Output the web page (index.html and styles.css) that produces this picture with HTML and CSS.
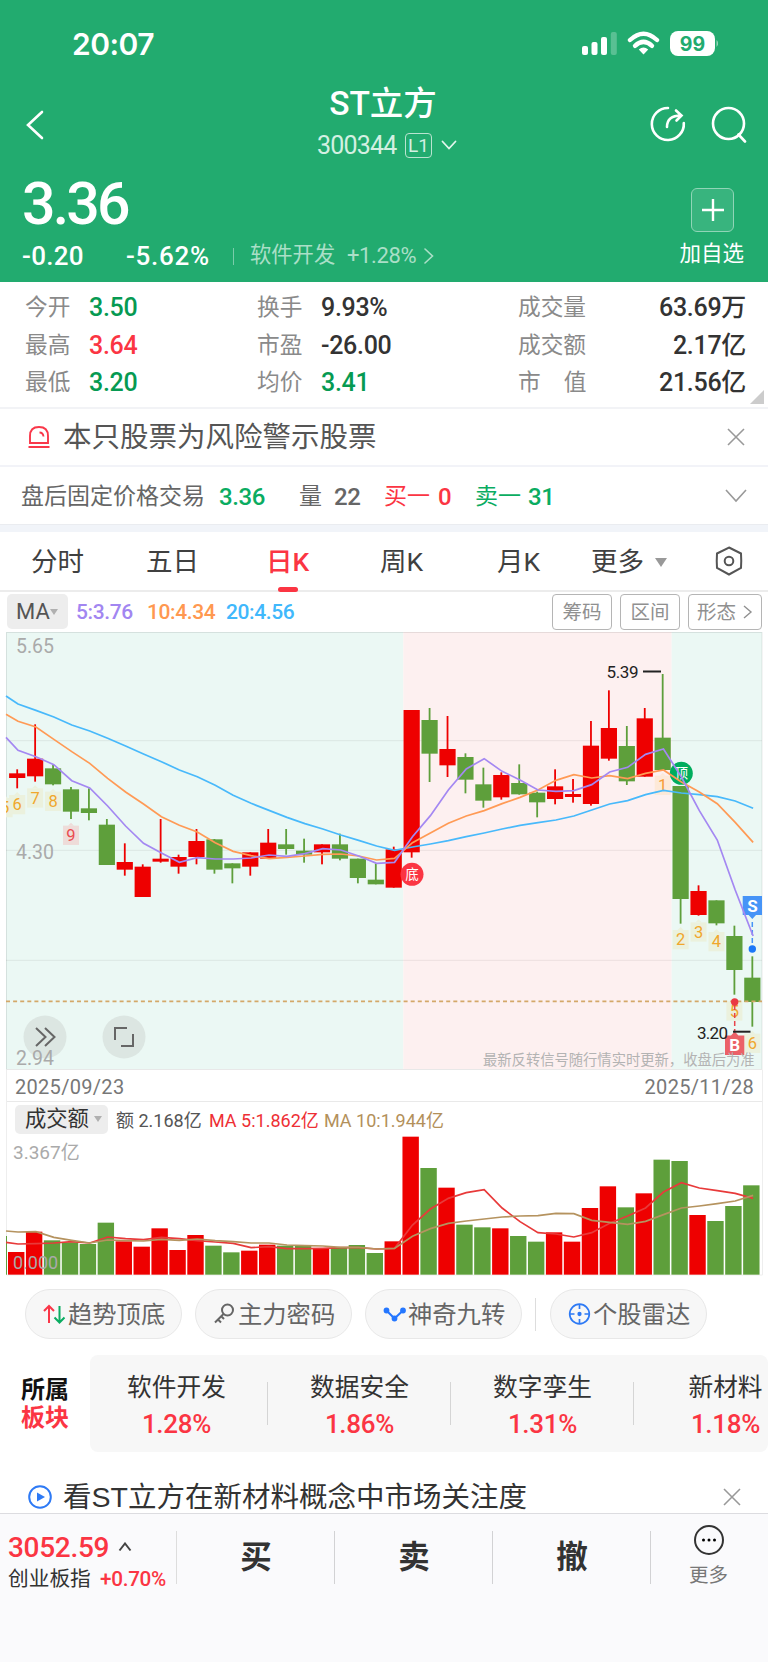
FILE: index.html
```html
<!DOCTYPE html>
<html lang="zh-CN">
<head>
    <meta charset="UTF-8">
    <meta name="viewport" content="width=device-width, initial-scale=1.0">
    <title>ST立方 300344</title>
    <link rel="stylesheet" href="styles.css">
</head>
<body>
    <header class="header">
        <div class="status-bar">
            <span class="time">20:07</span>
            <svg class="status-icons" width="136" height="28" viewBox="0 0 136 28">
                <rect x="0" y="16" width="6" height="9" rx="2" fill="#fff"/>
                <rect x="9.5" y="12" width="6" height="13" rx="2" fill="#fff"/>
                <rect x="19" y="7" width="6" height="18" rx="2" fill="#fff"/>
                <rect x="28.8" y="2" width="6" height="23" rx="2" fill="#fff" opacity=".25"/>
                <g fill="none" stroke="#fff" stroke-width="4.4">
                    <path d="M48 10 Q61.500 -2.500 75 10"/>
                    <path d="M53 15.800 Q61.500 8 70 15.800"/>
                </g>
                <path d="M56.800 19.500 Q61.500 15.500 66.200 19.500 L61.500 24.500Z" fill="#fff"/>
                <rect x="88" y="1" width="45" height="25" rx="8" fill="#fff"/>
                <path d="M134.500 10 Q138 13.500 134.500 17Z" fill="#fff" opacity=".5"/>
                <text x="110.500" y="20.800" class="battery">99</text>
            </svg>
        </div>

        <div class="title-bar">
            <svg class="back" width="18" height="30" viewBox="0 0 18 30"><path d="M16 2 L2 15 L16 28"/></svg>
            <div class="title">
                <h1>ST立方</h1>
                <div class="code">
                    <span class="num">300344</span>
                    <span class="level">L1</span>
                    <svg width="16" height="11" viewBox="0 0 16 11"><path d="M1.500 1.500 L8 8.500 L14.500 1.500"/></svg>
                </div>
            </div>
            <div class="title-icons">
                <svg width="36" height="36" viewBox="0 0 36 36">
                    <path d="M18 2 A16 16 0 1 0 33.800 17"/>
                    <path d="M17 21 Q17 9.500 31 9.500 M26 4.500 L31.500 9.500 L26.500 14.500"/>
                </svg>
                <svg width="36" height="37" viewBox="0 0 36 37">
                    <circle cx="17.500" cy="17.500" r="15.500"/>
                    <path d="M27.500 28.500 L34 35.500"/>
                </svg>
            </div>
        </div>

        <div class="price-row">
            <span class="price num">3.36</span>
            <div class="add"><svg width="22" height="22" viewBox="0 0 22 22"><path d="M0 11 H22 M11 0 V22"/></svg></div>
        </div>
        <div class="change-row">
            <span class="change num">-0.20</span>
            <span class="percent num">-5.62%</span>
            <span class="industry">软件开发</span>
            <span class="industry-pct num">+1.28%</span>
            <svg width="10" height="16" viewBox="0 0 10 16"><path d="M1 1 L8.500 8 L1 15"/></svg>
            <span class="add-label">加自选</span>
        </div>
    </header>

    <section class="stats">
        <span class="label">今开</span><b class="num green">3.50</b>
        <span class="label">换手</span><b class="num">9.93%</b>
        <span class="label">成交量</span><b class="num right">63.69万</b>
        <span class="label">最高</span><b class="num red">3.64</b>
        <span class="label">市盈</span><b class="num">-26.00</b>
        <span class="label">成交额</span><b class="num right">2.17亿</b>
        <span class="label">最低</span><b class="num green">3.20</b>
        <span class="label">均价</span><b class="num green">3.41</b>
        <span class="label">市<i></i>值</span><b class="num right">21.56亿</b>
        <div class="corner"></div>
    </section>

    <section class="notice">
        <svg class="notice-icon" width="24" height="24" viewBox="0 0 24 24">
            <g fill="none" stroke="#f9384a" stroke-width="1.900">
                <path d="M3 18 V11 Q3 2 12 2 Q21 2 21 11 V18Z"/>
                <path d="M1.500 22 H22.500 M12.500 7.500 Q16 7.500 16.500 11.500"/>
            </g>
        </svg>
        <span>本只股票为风险警示股票</span>
        <svg class="close" width="18" height="18" viewBox="0 0 18 18"><path d="M1 1 L17 17 M17 1 L1 17"/></svg>
    </section>

    <section class="after-hours">
        <span>盘后固定价格交易</span>
        <span class="num bright">3.36</span>
        <span>量</span>
        <span class="num">22</span>
        <span class="red">买一</span>
        <span class="num red">0</span>
        <span class="bright">卖一</span>
        <span class="num bright">31</span>
        <svg class="close" width="22" height="14" viewBox="0 0 22 14"><path d="M1 1 L11 12 L21 1"/></svg>
    </section>
    <div class="band"></div>

    <nav class="tabs">
        <span>分时</span>
        <span>五日</span>
        <span class="active">日K</span>
        <span>周K</span>
        <span>月K</span>
        <span class="more">更多<i class="tri"></i></span>
        <svg width="28" height="30" viewBox="0 0 28 30">
            <path d="M14 1.500 L26 7.500 Q26.500 15 26 22 L14 28.500 L2 22 Q1.500 15 2 7.500Z"/>
            <circle cx="14" cy="15" r="4.300"/>
        </svg>
    </nav>

    <section class="ma-row">
        <span class="picker">MA<i class="tri small"></i></span>
        <span class="num ma5">5:3.76</span>
        <span class="num ma10">10:4.34</span>
        <span class="num ma20">20:4.56</span>
        <div class="tools">
            <span class="tool">筹码</span>
            <span class="tool">区间</span>
            <span class="tool wide">形态<svg width="10" height="16" viewBox="0 0 10 16"><path d="M1 2 L8 8 L1 14"/></svg></span>
        </div>
    </section>

    <svg id="kline" class="kline" width="768" height="438" viewBox="0 632 768 438"></svg>

    <div class="panel">
        <div class="dates num"><span>2025/09/23</span><span>2025/11/28</span></div>
        <div class="volume-head">
            <span class="picker">成交额<i class="tri small"></i></span>
            <span class="num v0">额 2.168亿</span>
            <span class="num v5">MA 5:1.862亿</span>
            <span class="num v10">MA 10:1.944亿</span>
        </div>
    </div>
    <svg id="volume" class="volume" width="768" height="140" viewBox="0 1136 768 140"></svg>

    <section class="pills">
        <span class="pill">
            <svg width="24" height="24" viewBox="0 0 24 24" fill="none" stroke-width="2">
                <path stroke="#fa3648" d="M6 21 V4 M1 9 L6 4 L11 9"/>
                <path stroke="#0aac61" d="M16.500 4 V20 M11.500 15.500 L16.500 20.500 L21.500 15.500"/>
            </svg><span>趋势顶底</span>
        </span>
        <span class="pill">
            <svg width="24" height="24" viewBox="0 0 24 24" fill="none" stroke="#666" stroke-width="2">
                <circle cx="14.500" cy="8" r="5.500"/>
                <path d="M10.500 12 L2 20.500 M5 17.500 L8 20.500 M8.500 14.500 L11 17"/>
            </svg><span>主力密码</span>
        </span>
        <span class="pill">
            <svg width="24" height="24" viewBox="0 0 24 24" fill="#2577ff" stroke="#2577ff" stroke-width="2">
                <path d="M3.500 8.500 L11.500 16.500 L20 8.500" fill="none"/>
                <circle cx="3.500" cy="8.500" r="1.900"/><circle cx="11.500" cy="16.500" r="1.900"/><circle cx="20" cy="8.500" r="1.900"/>
            </svg><span>神奇九转</span>
        </span>
        <i class="pill-line"></i>
        <span class="pill">
            <svg width="24" height="24" viewBox="0 0 24 24" fill="none" stroke="#2e7af5" stroke-width="1.700">
                <circle cx="11.500" cy="12" r="9.800"/>
                <path d="M11.500 2 V7 M11.500 17 V22 M1.500 12 H6.500 M16.500 12 H21.500"/>
                <circle cx="11.500" cy="12" r="1.300" fill="#2e7af5"/>
            </svg><span>个股雷达</span>
        </span>
    </section>

    <section class="blocks">
        <div class="blocks-title">所属<br><em>板块</em></div>
        <div class="blocks-list">
            <div class="block first"><span>软件开发</span><b class="num">1.28%</b></div>
            <div class="block"><span>数据安全</span><b class="num">1.86%</b></div>
            <div class="block"><span>数字孪生</span><b class="num">1.31%</b></div>
            <div class="block"><span>新材料</span><b class="num">1.18%</b></div>
        </div>
    </section>

    <section class="notice promo">
        <svg class="notice-icon" width="24" height="24" viewBox="0 0 24 24">
            <circle cx="12" cy="12" r="10.800" fill="none" stroke="#2e7af5" stroke-width="2"/>
            <path d="M9 7.500 L17 12 L9 16.500Z" fill="#2e7af5"/>
        </svg>
        <span>看ST立方在新材料概念中市场关注度</span>
        <svg class="close" width="18" height="18" viewBox="0 0 18 18"><path d="M1 1 L17 17 M17 1 L1 17"/></svg>
    </section>

    <footer class="bottom-bar">
        <div class="index">
            <div class="index-value"><span class="num">3052.59</span><svg width="14" height="10" viewBox="0 0 14 10"><path d="M1.500 8.500 L7 1.500 L12.500 8.500"/></svg></div>
            <div class="index-name">创业板指<span class="num">+0.70%</span></div>
        </div>
        <div class="action">买</div>
        <div class="action">卖</div>
        <div class="action">撤</div>
        <div class="more-action">
            <svg width="32" height="32" viewBox="0 0 32 32">
                <circle cx="16" cy="16" r="14" fill="none" stroke="#333" stroke-width="2"/>
                <circle cx="10.500" cy="16" r="1.500"/><circle cx="16" cy="16" r="1.500"/><circle cx="21.500" cy="16" r="1.500"/>
            </svg>
            <span>更多</span>
        </div>
    </footer>

    <script src="script.js"></script>
</body>
</html>
```

FILE: styles.css
```css
* {
    box-sizing: border-box;
}

body {
    margin: 0;
    width: 768px;
    height: 1662px;
    overflow: hidden;
    background-color: #fff;
    color: #333;
    font-family: "Liberation Sans", "Noto Sans CJK SC", sans-serif;
}

svg {
    display: block;
    flex: none;
}

i, em {
    font-style: normal;
}

.num {
    font-family: Roboto, "Noto Sans CJK SC", sans-serif;
    font-weight: 500;
}

.red { color: #fb3543; }
.green { color: #069a52; }
.bright { color: #0aac61; }

/* header */
.header {
    height: 282px;
    background-color: #22ab6f;
    color: #fff;
}

.header svg path, .header svg circle {
    stroke-linecap: round;
}

.status-bar {
    display: flex;
    justify-content: space-between;
    height: 88px;
    padding: 30px 50px 0 72px;
}

.time {
    font-family: Inter, sans-serif;
    font-size: 30px;
    font-weight: 600;
    line-height: 28px;
    letter-spacing: -0.5px;
}

.battery {
    font: 700 19.5px Inter, sans-serif;
    fill: #22ab6f;
    text-anchor: middle;
}

.title-bar {
    display: flex;
    height: 84px;
    fill: none;
    stroke: #fff;
    stroke-width: 2.6;
}

.back {
    margin: 22px 0 0 26px;
}

.title {
    width: 340px;
    margin-left: 168px;
    text-align: center;
    stroke: none;
}

.title h1 {
    margin: -5px 0 0 2px;
    font-family: Roboto, "Noto Sans CJK SC", sans-serif;
    font-size: 33.5px;
    font-weight: 500;
    line-height: 42px;
    height: 40px;
}

.code {
    display: flex;
    align-items: center;
    justify-content: center;
    height: 30px;
    margin-top: 7px;
    padding-left: 10px;
    color: #d3f0e2;
}

.code .num {
    width: 88px;
    font-size: 25px;
    font-weight: 400;
    letter-spacing: -0.8px;
    text-align: left;
}

.level {
    width: 27px;
    height: 25px;
    border: 1px solid #b9e4d0;
    border-radius: 4px;
    font-family: Roboto, sans-serif;
    font-size: 19px;
    line-height: 24px;
}

.code svg {
    margin-left: 9px;
    stroke: #e2f5ec;
    stroke-width: 1.8;
}

.title-icons {
    display: flex;
    gap: 25px;
    margin: 18px 0 0 98px;
}

.price-row {
    display: flex;
    justify-content: space-between;
    height: 67px;
    padding: 0 34px 0 22px;
}

.price {
    margin-top: -4px;
    font-size: 59px;
    line-height: 72px;
    letter-spacing: -2.8px;
}

.add {
    display: grid;
    place-items: center;
    width: 43px;
    height: 44px;
    margin-top: 16px;
    border: 1.5px solid #90d5b7;
    border-radius: 6px;
    background-color: #38b47e;
    stroke: #fff;
    stroke-width: 2.4;
}

.change-row {
    display: flex;
    align-items: center;
    height: 33px;
    padding: 2px 24px 0 22px;
    line-height: 33px;
}

.change {
    width: 104px;
    font-size: 26px;
    letter-spacing: 0.3px;
}

.percent {
    width: 107px;
    font-size: 26px;
    letter-spacing: 0.7px;
}

.industry {
    margin-top: -2px;
    padding-left: 17px;
    width: 114px;
    font-size: 21.3px;
    color: #aadfc7;
    background: linear-gradient(#7accaa, #7accaa) 0 9px / 1px 17px no-repeat;
}

.industry-pct {
    width: 77px;
    margin-top: -2px;
    font-size: 22px;
    font-weight: 400;
    letter-spacing: -0.4px;
    color: #aadfc7;
}

.change-row svg {
    margin-top: -2px;
    fill: none;
    stroke: #aadfc7;
    stroke-width: 1.6;
}

.add-label {
    margin-left: auto;
    font-size: 21.5px;
    margin-top: -4px;
}

/* quotes table */
.stats {
    position: relative;
    display: grid;
    grid-template-columns: 64px 168px 64px 197px 90px 138px;
    grid-auto-rows: 37.7px;
    height: 127px;
    padding: 6px 21px 0 25px;
    border-bottom: 2px solid #f2f3f6;
    line-height: 38px;
}

.label {
    font-size: 22.7px;
    color: #8a8a8a;
    white-space: nowrap;
}

.label i {
    display: inline-block;
    width: 23px;
}

.stats b {
    padding-top: 1px;
    font-size: 25px;
    letter-spacing: -0.3px;
}

.right {
    text-align: right;
}

.corner {
    position: absolute;
    right: 4px;
    bottom: 3px;
    border-left: 14px solid transparent;
    border-bottom: 14px solid #ccc;
}

.notice {
    display: flex;
    align-items: center;
    height: 58px;
    padding: 0 23px 0 27px;
    border-bottom: 2px solid #f2f3f8;
    font-size: 28.5px;
    line-height: 56px;
    color: #555;
}

.notice-icon {
    margin-right: 12px;
}

.close {
    margin-left: auto;
    fill: none;
    stroke: #999;
    stroke-width: 1.6;
}

.after-hours {
    display: grid;
    grid-template-columns: 198px 80px 35px 50px 54px 37px 53px 60px 1fr;
    align-items: center;
    height: 57px;
    padding: 0 21px 0 21px;
    font-size: 23px;
    line-height: 54px;
    color: #666;
}

.after-hours .num {
    font-size: 24px;
    letter-spacing: -0.4px;
    padding-top: 2px;
}

.band {
    height: 8px;
    border-top: 1px solid #eaecf0;
    background-color: #f1f4f9;
}

/* period tabs */
.tabs {
    display: grid;
    grid-template-columns: 115px 120px 114px 117px 94px 124px 1fr;
    height: 60px;
    padding-left: 31px;
    border-bottom: 2px solid #ececec;
    font-family: Roboto, "Noto Sans CJK SC", sans-serif;
    font-size: 26.5px;
    line-height: 60px;
    color: #404040;
}

.active {
    position: relative;
    color: #fb3543;
    font-weight: 500;
}

.active::after {
    content: "";
    position: absolute;
    left: 12px;
    bottom: 0;
    width: 20px;
    height: 5px;
    border-radius: 3px;
    background-color: #fb3543;
}

.tabs svg {
    margin-top: 14px;
    fill: none;
    stroke: #555;
    stroke-width: 2;
}

.tri {
    display: inline-block;
    margin-left: 11px;
    border: 6.5px solid transparent;
    border-top: 9px solid #999;
    border-bottom: 0;
    vertical-align: 4px;
}

.tri.small {
    margin-left: 2px;
    border-width: 6px 4.5px 0;
    border-top-color: #b0b0b0;
}

.ma-row {
    display: flex;
    height: 41px;
    padding: 2px 6px 0 7px;
    line-height: 36px;
}

.picker {
    border-radius: 5px;
    background-color: #ededed;
    white-space: nowrap;
}

.ma-row .picker {
    width: 61px;
    height: 35px;
    padding-left: 9px;
    font: 22px/35px Roboto, sans-serif;
    color: #555;
}

.ma-row .picker .tri {
    margin-left: 0;
}

.ma-row .num {
    font-size: 21px;
    letter-spacing: -0.4px;
}

.ma5 {
    width: 79px;
    padding-left: 8px;
    color: #a286f1;
}

.ma10 {
    width: 79px;
    color: #ff9850;
}

.ma20 {
    color: #40b8fc;
}

.tools {
    display: flex;
    gap: 8px;
    margin-left: auto;
}

.tool {
    width: 60px;
    height: 36px;
    border: 1px solid #b5b5b5;
    border-radius: 4px;
    font-size: 19.5px;
    line-height: 34px;
    text-align: center;
    color: #909090;
}

.tool.wide {
    display: flex;
    align-items: center;
    justify-content: center;
    gap: 7px;
    width: 74px;
    fill: none;
    stroke: none;
}

.tool svg path {
    stroke: #909090;
    stroke-width: 1.4;
}

/* charts */
.kline, .volume {
    font-family: Roboto, "Noto Sans CJK SC", sans-serif;
}

.kline {
    margin-top: -1px;
}

.panel {
    width: 757px;
    height: 66px;
    margin-left: 6px;
    border: 1px solid #eee;
    border-width: 0 1px;
}

.dates {
    display: flex;
    justify-content: space-between;
    height: 32px;
    padding: 0 8px;
    border-bottom: 1px solid #e9e9e9;
    font-size: 20px;
    font-weight: 400;
    line-height: 34px;
    letter-spacing: 0.3px;
    color: #777;
}

.volume-head {
    display: flex;
    padding: 3px 0 0 8px;
    line-height: 32px;
}

.volume-head .picker {
    width: 93px;
    height: 29px;
    padding-left: 10px;
    font-size: 21.3px;
    line-height: 28px;
}

.volume-head .picker .tri {
    margin-left: 5px;
}

.volume-head .num {
    font-size: 18px;
    font-weight: 400;
    white-space: nowrap;
}

.volume-head .v0 {
    width: 101px;
    padding-left: 8px;
    color: #555;
}

.volume-head .v5 {
    width: 115px;
    color: #ee2f35;
}

.volume-head .v10 {
    color: #b3905a;
}

/* shortcuts */
.pills {
    display: flex;
    align-items: center;
    gap: 13px;
    height: 50px;
    margin-top: 13px;
    padding-left: 25px;
}

.pill {
    display: flex;
    align-items: center;
    gap: 1px;
    width: 157px;
    height: 50px;
    padding-left: 17px;
    border: 1px solid #e8e8e8;
    border-radius: 25px;
    background-color: #f7f7f7;
    font-size: 24.3px;
    color: #666;
    white-space: nowrap;
}

.pill span {
    margin-top: -3px;
}

.pill-line {
    width: 1px;
    height: 33px;
    margin-right: 1px;
    background-color: #ddd;
}

.blocks {
    display: flex;
    height: 97px;
    margin-top: 16px;
}

.blocks-title {
    width: 90px;
    padding: 21px 0 0 21px;
    font-size: 24px;
    font-weight: 700;
    line-height: 28px;
    color: #111;
}

.blocks-title em {
    color: #fb3543;
}

.blocks-list {
    display: flex;
    width: 678px;
    overflow: hidden;
    border-radius: 8px;
    background-color: #f7f7f7;
}

.block {
    flex: none;
    width: 183px;
    height: 97px;
    padding-top: 14px;
    text-align: center;
    font-size: 24.7px;
    line-height: 37px;
    background: linear-gradient(#d5d5d5, #d5d5d5) 100% 27px / 1px 43px no-repeat;
}

.block.first {
    width: 178px;
    padding-right: 5px;
}

.block b {
    display: block;
    font-size: 26px;
    line-height: 36px;
    letter-spacing: -0.3px;
    color: #fb3543;
}

.promo {
    height: 61px;
    padding: 28px 27px 0 28px;
    border: 0;
    line-height: 34px;
    color: #333;
}

.promo .notice-icon {
    margin-right: 11px;
}

/* bottom bar */
.bottom-bar {
    display: flex;
    height: 149px;
    border-top: 1px solid #dcdce0;
    background-color: #fafafc;
}

.index {
    width: 177px;
    height: 80px;
    padding: 16px 0 0 8px;
    background: linear-gradient(#ddd, #ddd) 100% 17px / 1px 53px no-repeat;
}

.index-value {
    display: flex;
    align-items: center;
    gap: 9px;
    height: 34px;
    font-size: 28px;
    letter-spacing: -0.3px;
    color: #fb3543;
    fill: none;
    stroke: none;
}

.index-value path {
    stroke: #444;
    stroke-width: 2;
}

.index-name {
    display: flex;
    justify-content: space-between;
    padding-right: 11px;
    font-size: 20.7px;
    line-height: 30px;
    white-space: nowrap;
}

.index-name .num {
    letter-spacing: -0.3px;
    color: #fb3543;
}

.action {
    width: 158px;
    height: 80px;
    background: linear-gradient(#d2d2d4, #d2d2d4) 100% 17px / 1px 53px no-repeat;
    font-size: 31.5px;
    font-weight: bold;
    line-height: 87px;
    text-align: center;
}

.more-action {
    display: flex;
    flex-direction: column;
    align-items: center;
    gap: 3px;
    width: 115px;
    padding-top: 10px;
    font-size: 19.5px;
    color: #777;
}
```

FILE: script.js
```js
const RED = "#ee0000";
const GREEN = "#5e9f3b";
const STEP = 17.93;

// values are thirds of a pixel from the top of the axis
// [color, high, top, bottom, low]
const candles = [
    ["r", 418, 430, 444, 475], ["r", 283, 386, 439, 455], ["g", 404, 415, 463, 466],
    ["g", 471, 478, 545, 567], ["g", 475, 535, 549, 571], ["g", 567, 584, 705, 705],
    ["r", 640, 696, 719, 737], ["r", 703, 710, 801, 801], ["r", 567, 686, 695, 698],
    ["r", 674, 681, 710, 731], ["r", 597, 633, 681, 703], ["g", 627, 628, 719, 731],
    ["g", 700, 700, 715, 760], ["r", 667, 667, 710, 737], ["r", 597, 638, 686, 686],
    ["g", 597, 643, 657, 674], ["g", 626, 662, 674, 698], ["r", 643, 643, 667, 703],
    ["g", 611, 643, 686, 691], ["g", 686, 686, 744, 760], ["g", 700, 749, 763, 763],
    ["r", 650, 658, 773, 773], ["r", 240, 240, 667, 683], ["g", 234, 270, 371, 456],
    ["r", 258, 357, 406, 441], ["g", 370, 381, 449, 490], ["g", 413, 463, 512, 533],
    ["r", 427, 435, 502, 509], ["g", 403, 459, 493, 494], ["g", 485, 488, 517, 562],
    ["r", 418, 469, 507, 523], ["r", 447, 492, 501, 518], ["r", 273, 347, 522, 527],
    ["r", 181, 294, 386, 392], ["g", 288, 348, 454, 465], ["r", 234, 265, 440, 440],
    ["g", 132, 323, 420, 420], ["g", 468, 468, 807, 881], ["r", 766, 783, 855, 857],
    ["g", 811, 811, 880, 886], ["g", 887, 918, 1020, 1094], ["g", 979, 1043, 1116, 1190]
];

// the first value of each line sits on the left edge
const ma5 = [322, 361, 380, 404, 452, 474, 528, 588, 640, 669, 697, 683, 687, 687, 684, 675, 679, 671, 656, 660, 678, 700, 697, 620, 557, 480, 417, 386, 424, 450, 480, 484, 482, 464, 426, 412, 373, 357, 441, 542, 630, 780, 918];
const ma10 = [253, 274, 291, 328, 365, 400, 445, 486, 522, 560, 586, 606, 638, 664, 677, 686, 682, 678, 673, 672, 678, 690, 685, 638, 609, 580, 558, 542, 521, 502, 480, 451, 434, 444, 437, 446, 430, 420, 456, 486, 521, 577, 637];
const ma20 = [198, 222, 241, 261, 285, 303, 325, 348, 372, 395, 420, 440, 466, 496, 520, 541, 562, 581, 597, 615, 631, 648, 661, 651, 642, 632, 620, 609, 597, 586, 578, 570, 558, 540, 522, 512, 494, 481, 489, 494, 500, 513, 535];

const volumes = [486, 425, 451, 457, 462, 398, 454, 470, 415, 480, 435, 467, 487, 482, 464, 467, 467, 474, 474, 465, 489, 454, 140, 234, 293, 404, 412, 415, 438, 455, 427, 455, 354, 289, 352, 310, 209, 213, 375, 393, 348, 286];
const vol5 = [457, 462, 461, 459, 455, 459, 441, 446, 449, 442, 446, 452, 456, 460, 473, 470, 476, 476, 475, 473, 473, 477, 475, 405, 357, 325, 308, 299, 354, 395, 428, 432, 441, 428, 400, 378, 354, 306, 278, 294, 302, 310, 325];
const vol10 = [423, 426, 425, 442, 451, 459, 450, 452, 453, 448, 451, 447, 452, 455, 459, 459, 465, 467, 468, 472, 472, 477, 475, 439, 416, 400, 393, 387, 381, 378, 377, 370, 371, 391, 397, 403, 394, 374, 354, 348, 341, 333, 316];

// nine-turn counters: [index, top, digit, kind]
const marks = [
    [-0.7, 504, "5", "y"], [0, 495, "6", "y"], [1, 475, "7", "y"], [2, 485, "8", "y"], [3, 587, "9", "r"],
    [36, 437, "1", "o"], [37, 900, "2", "y"], [38, 877, "3", "y"], [39, 906, "4", "y"],
    [40, 1114, "5", "y"], [41, 1211, "6", "y"]
];
const markColors = { y: ["#ebf1dd", "#f0a72c"], r: ["#eedcd9", "#ea4b4f"], o: ["#fde9d8", "#f79b35"] };

function cx(i) {
    return 17.2 + STEP * i;
}

function rect(x, y, w, h, fill) {
    return `<rect x="${x}" y="${y}" width="${w}" height="${h}" fill="${fill}"/>`;
}

function line(values, base, color) {
    const points = values.map((v, i) => (i === 0 ? 6 : cx(i - 1) + 0.8) + "," + (base + v / 3));
    return `<polyline points="${points.join(" ")}" fill="none" stroke="${color}" stroke-width="1.7"/>`;
}

function drawKline() {
    let s = rect(6, 632, 397.3, 437, "#ebf8f4") + rect(403.3, 632, 268.4, 437, "#fdf0f0") + rect(671.7, 632, 90.3, 437, "#ebf8f4");
    [740.7, 850.3, 960.3].forEach(y => {
        s += rect(6, y - 0.5, 756, 1, "rgba(0,0,0,.07)");
    });
    s += '<rect x="6.5" y="632.5" width="755.5" height="437" fill="none" stroke="rgba(0,0,0,.09)"/>';
    s += '<clipPath id="area"><rect x="6" y="632" width="757" height="438"/></clipPath>';
    s += '<g font-size="19.5" fill="#aaa"><text x="16" y="652.500">5.65</text><text x="16" y="858.500">4.30</text></g>';

    candles.forEach((c, i) => {
        const fill = c[0] === "r" ? RED : GREEN;
        s += rect(cx(i) - 0.9, 630 + c[1] / 3, 1.8, (c[4] - c[1]) / 3, fill);
        s += rect(cx(i) - 8.1, 630 + c[2] / 3, 16.2, (c[3] - c[2]) / 3, fill);
    });

    s += '<g clip-path="url(#area)" font-size="16.5" text-anchor="middle">';
    marks.forEach(m => {
        const [bg, fg] = markColors[m[3]];
        const x = cx(m[0]);
        const y = 630 + m[1] / 3;
        s += rect(x - 8, y, 16, 19.3, bg);
        s += `<path d="M${x - 3} ${y} L${x} ${y - 3} L${x + 3} ${y}Z" fill="${bg}"/>`;
        s += `<text x="${x}" y="${y + 15.3}" fill="${fg}">${m[2]}</text>`;
    });
    s += "</g>";

    s += '<path d="M6 1001.300 H762" stroke="#d4a869" stroke-width="1.700" stroke-dasharray="4 3.100"/>';

    // top / bottom signals
    s += '<g text-anchor="middle" fill="#fff" font-size="13.5">';
    s += '<circle cx="412" cy="874.300" r="11.500" fill="#fb3543"/><text x="412" y="879.300">底</text>';
    s += '<circle cx="681.300" cy="773.300" r="11.500" fill="#00ad5d"/><text x="681.300" y="778.300">顶</text></g>';

    // buy / sell flags
    s += '<path d="M742.700 896 H762 V915 H756 L752.300 919 L748.600 915 H742.700Z" fill="#4694f7"/>';
    s += '<path d="M752.300 922 V946" stroke="#4694f7" stroke-width="1.500" stroke-dasharray="5 3"/><circle cx="752.300" cy="949" r="3.700" fill="#1b78f7"/>';
    s += '<path d="M725 1035.500 H731 L734.700 1031.500 L738.400 1035.500 H744.300 V1055 H725Z" fill="#eb6167"/>';
    s += '<path d="M734.700 1005 V1031" stroke="#e8434b" stroke-width="1.500" stroke-dasharray="5 3"/><circle cx="734.700" cy="1002" r="3.700" fill="#ea3943"/>';
    s += '<g fill="#fff" font-size="17" font-weight="700" text-anchor="middle"><text x="752.500" y="912">S</text><text x="734.700" y="1051.300">B</text></g>';

    s += line(ma20, 630, "#48b9fb") + line(ma10, 630, "#ff9a55") + line(ma5, 630, "#a488f2");

    s += '<g font-size="17" fill="#222"><text x="606.500" y="678" textLength="32">5.39</text><text x="697" y="1038.500" textLength="31">3.20</text></g>';
    s += rect(643, 670.5, 18, 2, "#222") + rect(733, 1030.7, 17.5, 2, "#222");
    s += '<text x="483" y="1065" font-size="14.300" fill="#b3b3b3">最新反转信号随行情实时更新，收盘后为准</text>';

    s += '<circle cx="45" cy="1037" r="21.500" fill="#dce6e2"/><circle cx="124" cy="1037" r="21.500" fill="#dce6e2"/>';
    s += '<g fill="none" stroke="#666" stroke-width="2"><path d="M36 1028 L45.500 1037 L36 1046 M45 1028 L54.500 1037 L45 1046"/>';
    s += '<path d="M115 1040 V1028 H127 M121 1046 H133 V1034"/></g>';
    s += '<text x="16" y="1065" font-size="19.500" fill="#aaa">2.94</text>';
    document.getElementById("kline").innerHTML = s;
}

function drawVolume() {
    let s = '<path d="M6.500 1136 V1275 H762.500 V1136" fill="none" stroke="#eee"/>';
    s += rect(6, 1236, 1, 38.7, GREEN);
    volumes.forEach((v, i) => {
        s += rect(cx(i) - 9.2, 1090 + v / 3, 16.4, (554 - v) / 3, candles[i][0] === "r" ? RED : GREEN);
    });
    s += line(vol5, 1090, "#e83a3a") + line(vol10, 1090, "#b5935f");
    s += '<text x="13" y="1158.500" font-size="19" fill="#aaa">3.367亿</text>';
    s += '<text x="13" y="1268.500" font-size="18" fill="#aaa">0.000</text>';
    document.getElementById("volume").innerHTML = s;
}

drawKline();
drawVolume();
```
